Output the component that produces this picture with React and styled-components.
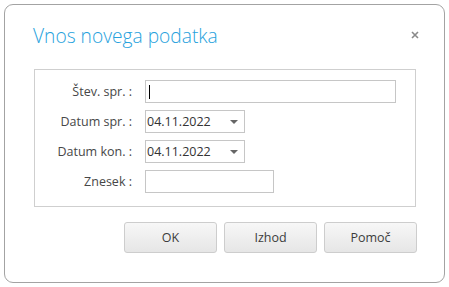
import React from "react";
import styled, { createGlobalStyle } from "styled-components";

const GlobalStyle = createGlobalStyle`
  html, body {
    margin: 0;
    padding: 0;
    background: #ffffff;
  }
  body {
    font-family: "Open Sans", "DejaVu Sans", sans-serif;
  }
`;

const Page = styled.div`
  width: 449px;
  height: 287px;
  padding: 4px;
  box-sizing: border-box;
`;

const Dialog = styled.div`
  height: 279px;
  box-sizing: border-box;
  border: 1px solid #a3a3a3;
  border-radius: 9px;
  background: #fff;
  padding: 0 28px 0 29px;
  display: flex;
  flex-direction: column;
`;

const Header = styled.div`
  display: flex;
  align-items: center;
  justify-content: space-between;
  height: 64px;
  padding-bottom: 4px;
  box-sizing: border-box;
`;

const Title = styled.h1`
  margin: 0 0 0 -1px;
  font-family: "Open Sans", sans-serif;
  font-weight: 300;
  font-size: 19.2px;
  color: #27a2dd;
`;

const Close = styled.button`
  border: 0;
  background: none;
  padding: 0;
  margin-right: -4px;
  width: 10px;
  height: 10px;
  display: flex;
  align-items: center;
  justify-content: center;
`;

const Fieldset = styled.div`
  border: 1px solid #cfcfcf;
  height: 138px;
  box-sizing: border-box;
  padding: 10px 0 0 0;
  display: grid;
  grid-template-columns: 97px auto;
  column-gap: 13px;
  row-gap: 7px;
  align-content: start;
  align-items: center;
`;

const Label = styled.label`
  text-align: right;
  font-size: 12.5px;
  font-weight: 400;
  color: #474747;
  white-space: nowrap;
`;

const Field = styled.div`
  width: ${(p) => p.$w}px;
  height: 23px;
  box-sizing: border-box;
  border: 1px solid #c6c6c6;
  background: #fff;
  display: flex;
  align-items: center;
  padding: 0 0 0 1px;
  font-size: 12.5px;
  color: #333;
`;

const Caret = styled.span`
  width: 1px;
  height: 14px;
  background: #000;
  margin-left: 2px;
`;

const DateText = styled.span`
  flex: 1;
`;

const Arrow = styled.span`
  width: 0;
  height: 0;
  border-left: 4px solid transparent;
  border-right: 4px solid transparent;
  border-top: 4px solid #666;
  margin-right: 6px;
`;

const Footer = styled.div`
  display: flex;
  justify-content: flex-end;
  gap: 7px;
  padding-top: 15px;
  margin-right: -1px;
`;

const Button = styled.button`
  width: 93px;
  height: 31px;
  box-sizing: border-box;
  border: 1px solid #cdcdcd;
  border-radius: 3px;
  background: linear-gradient(#f7f7f7, #e6e6e6);
  font-family: "Open Sans", "DejaVu Sans", sans-serif;
  font-weight: 400;
  font-size: 12.5px;
  color: #3c3c3c;
  padding: 0;
`;

const rows = [
  { label: "Štev. spr. :", w: 251, kind: "text", focus: true },
  { label: "Datum spr. :", w: 100, kind: "date", value: "04.11.2022" },
  { label: "Datum kon. :", w: 100, kind: "date", value: "04.11.2022" },
  { label: "Znesek :", w: 129, kind: "text" },
];

export default function App() {
  return (
    <Page>
      <GlobalStyle />
      <Dialog>
        <Header>
          <Title>Vnos novega podatka</Title>
          <Close aria-label="Zapri">
            <svg width="8" height="8" viewBox="0 0 8 8">
              <path d="M1 1L7 7M7 1L1 7" stroke="#8a8a8a" strokeWidth="1.6" />
            </svg>
          </Close>
        </Header>
        <Fieldset>
          {rows.map((r) => (
            <React.Fragment key={r.label}>
              <Label>{r.label}</Label>
              <Field $w={r.w}>
                {r.focus && <Caret />}
                {r.kind === "date" && (
                  <>
                    <DateText>{r.value}</DateText>
                    <Arrow />
                  </>
                )}
              </Field>
            </React.Fragment>
          ))}
        </Fieldset>
        <Footer>
          <Button>OK</Button>
          <Button>Izhod</Button>
          <Button>Pomoč</Button>
        </Footer>
      </Dialog>
    </Page>
  );
}
